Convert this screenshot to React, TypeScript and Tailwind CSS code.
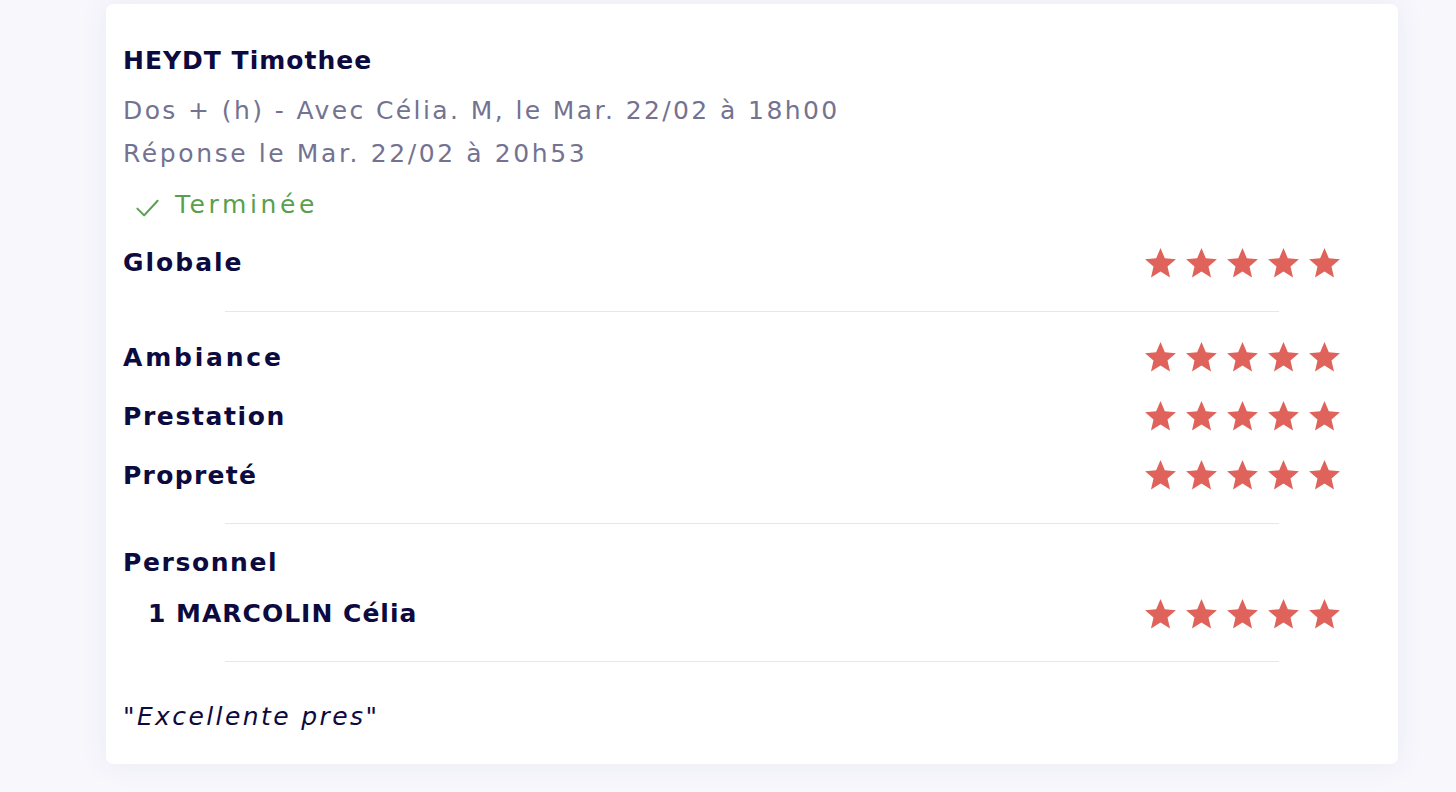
import React from "react";

const Star = () => (
  <svg width="37" height="37" viewBox="0 0 24 24" className="block shrink-0">
    <path
      fill="#df625b"
      d="M12 17.27L18.18 21l-1.64-7.03L22 9.24l-7.19-.61L12 2 9.19 8.63 2 9.24l5.46 4.73L5.82 21z"
    />
  </svg>
);

const Stars = () => (
  <div className="flex items-center gap-[4px]">
    <Star />
    <Star />
    <Star />
    <Star />
    <Star />
  </div>
);

const RatingRow = ({
  label,
  h,
  track,
  indent,
}: {
  label: string;
  h: string;
  track: string;
  indent?: boolean;
}) => (
  <div className={`flex items-center justify-between ${h}`}>
    <span className={`text-[25px] font-bold ${track} text-[#0c0a3e] ${indent ? "pl-[25px]" : ""}`}>
      {label}
    </span>
    <Stars />
  </div>
);

const Divider = ({ mt }: { mt: string }) => (
  <div className={`${mt} ml-[102px] mr-[64px] h-px bg-[#e6e6f3]`} />
);

export default function App() {
  return (
    <div
      className="min-h-[792px] w-full bg-[#f7f7fc] pl-[106px] pr-[58px] pt-[4px]"
      style={{ fontFamily: '"DejaVu Sans", "Liberation Sans", sans-serif' }}
    >
      <div className="rounded-[7px] bg-white pl-[17px] pr-[55px] pt-[37px] pb-[27px] shadow-[0_0_30px_rgba(70,70,160,0.07)]">
        <div className="h-[40px] flex items-center text-[25px] font-bold tracking-[1px] text-[#0c0a3e]">
          HEYDT Timothee
        </div>
        <div className="mt-[8px] text-[25px] leading-[43px] tracking-[2.4px] text-[#737391]">
          <div>Dos + (h) - Avec Célia. M, le Mar. 22/02 à 18h00</div>
          <div className="tracking-[2.6px]">Réponse le Mar. 22/02 à 20h53</div>
        </div>
        <div className="mt-[10px] flex h-[40px] items-center pl-[11px] text-[25px] tracking-[3.6px] text-[#5a9f4f]">
          <svg width="27" height="27" viewBox="0 0 24 24" fill="none" stroke="#5a9f4f" strokeWidth="1.8" strokeLinecap="round" strokeLinejoin="round" className="mr-[14px] mt-[4px]">
            <path d="M3 13l6 6L21 6" />
          </svg>
          Terminée
        </div>
        <div className="mt-[18px]">
          <RatingRow label="Globale" h="h-[40px]" track="tracking-[2px]" />
        </div>
        <Divider mt="mt-[28px]" />
        <div className="mt-[16px]">
          <RatingRow label="Ambiance" h="h-[59px]" track="tracking-[2.8px]" />
          <RatingRow label="Prestation" h="h-[59px]" track="tracking-[1.6px]" />
          <RatingRow label="Propreté" h="h-[59px]" track="tracking-[1.3px]" />
        </div>
        <Divider mt="mt-[18px]" />
        <div className="mt-[19px] flex h-[40px] items-center text-[25px] font-bold tracking-[1.6px] text-[#0c0a3e]">
          Personnel
        </div>
        <div className="mt-[11px]">
          <RatingRow label="1 MARCOLIN Célia" h="h-[40px]" track="tracking-[1px]" indent />
        </div>
        <Divider mt="mt-[27px]" />
        <div className="mt-[35px] flex h-[40px] items-center text-[25px] italic tracking-[2.4px] text-[#0c0a3e]">
          "Excellente pres"
        </div>
      </div>
    </div>
  );
}
